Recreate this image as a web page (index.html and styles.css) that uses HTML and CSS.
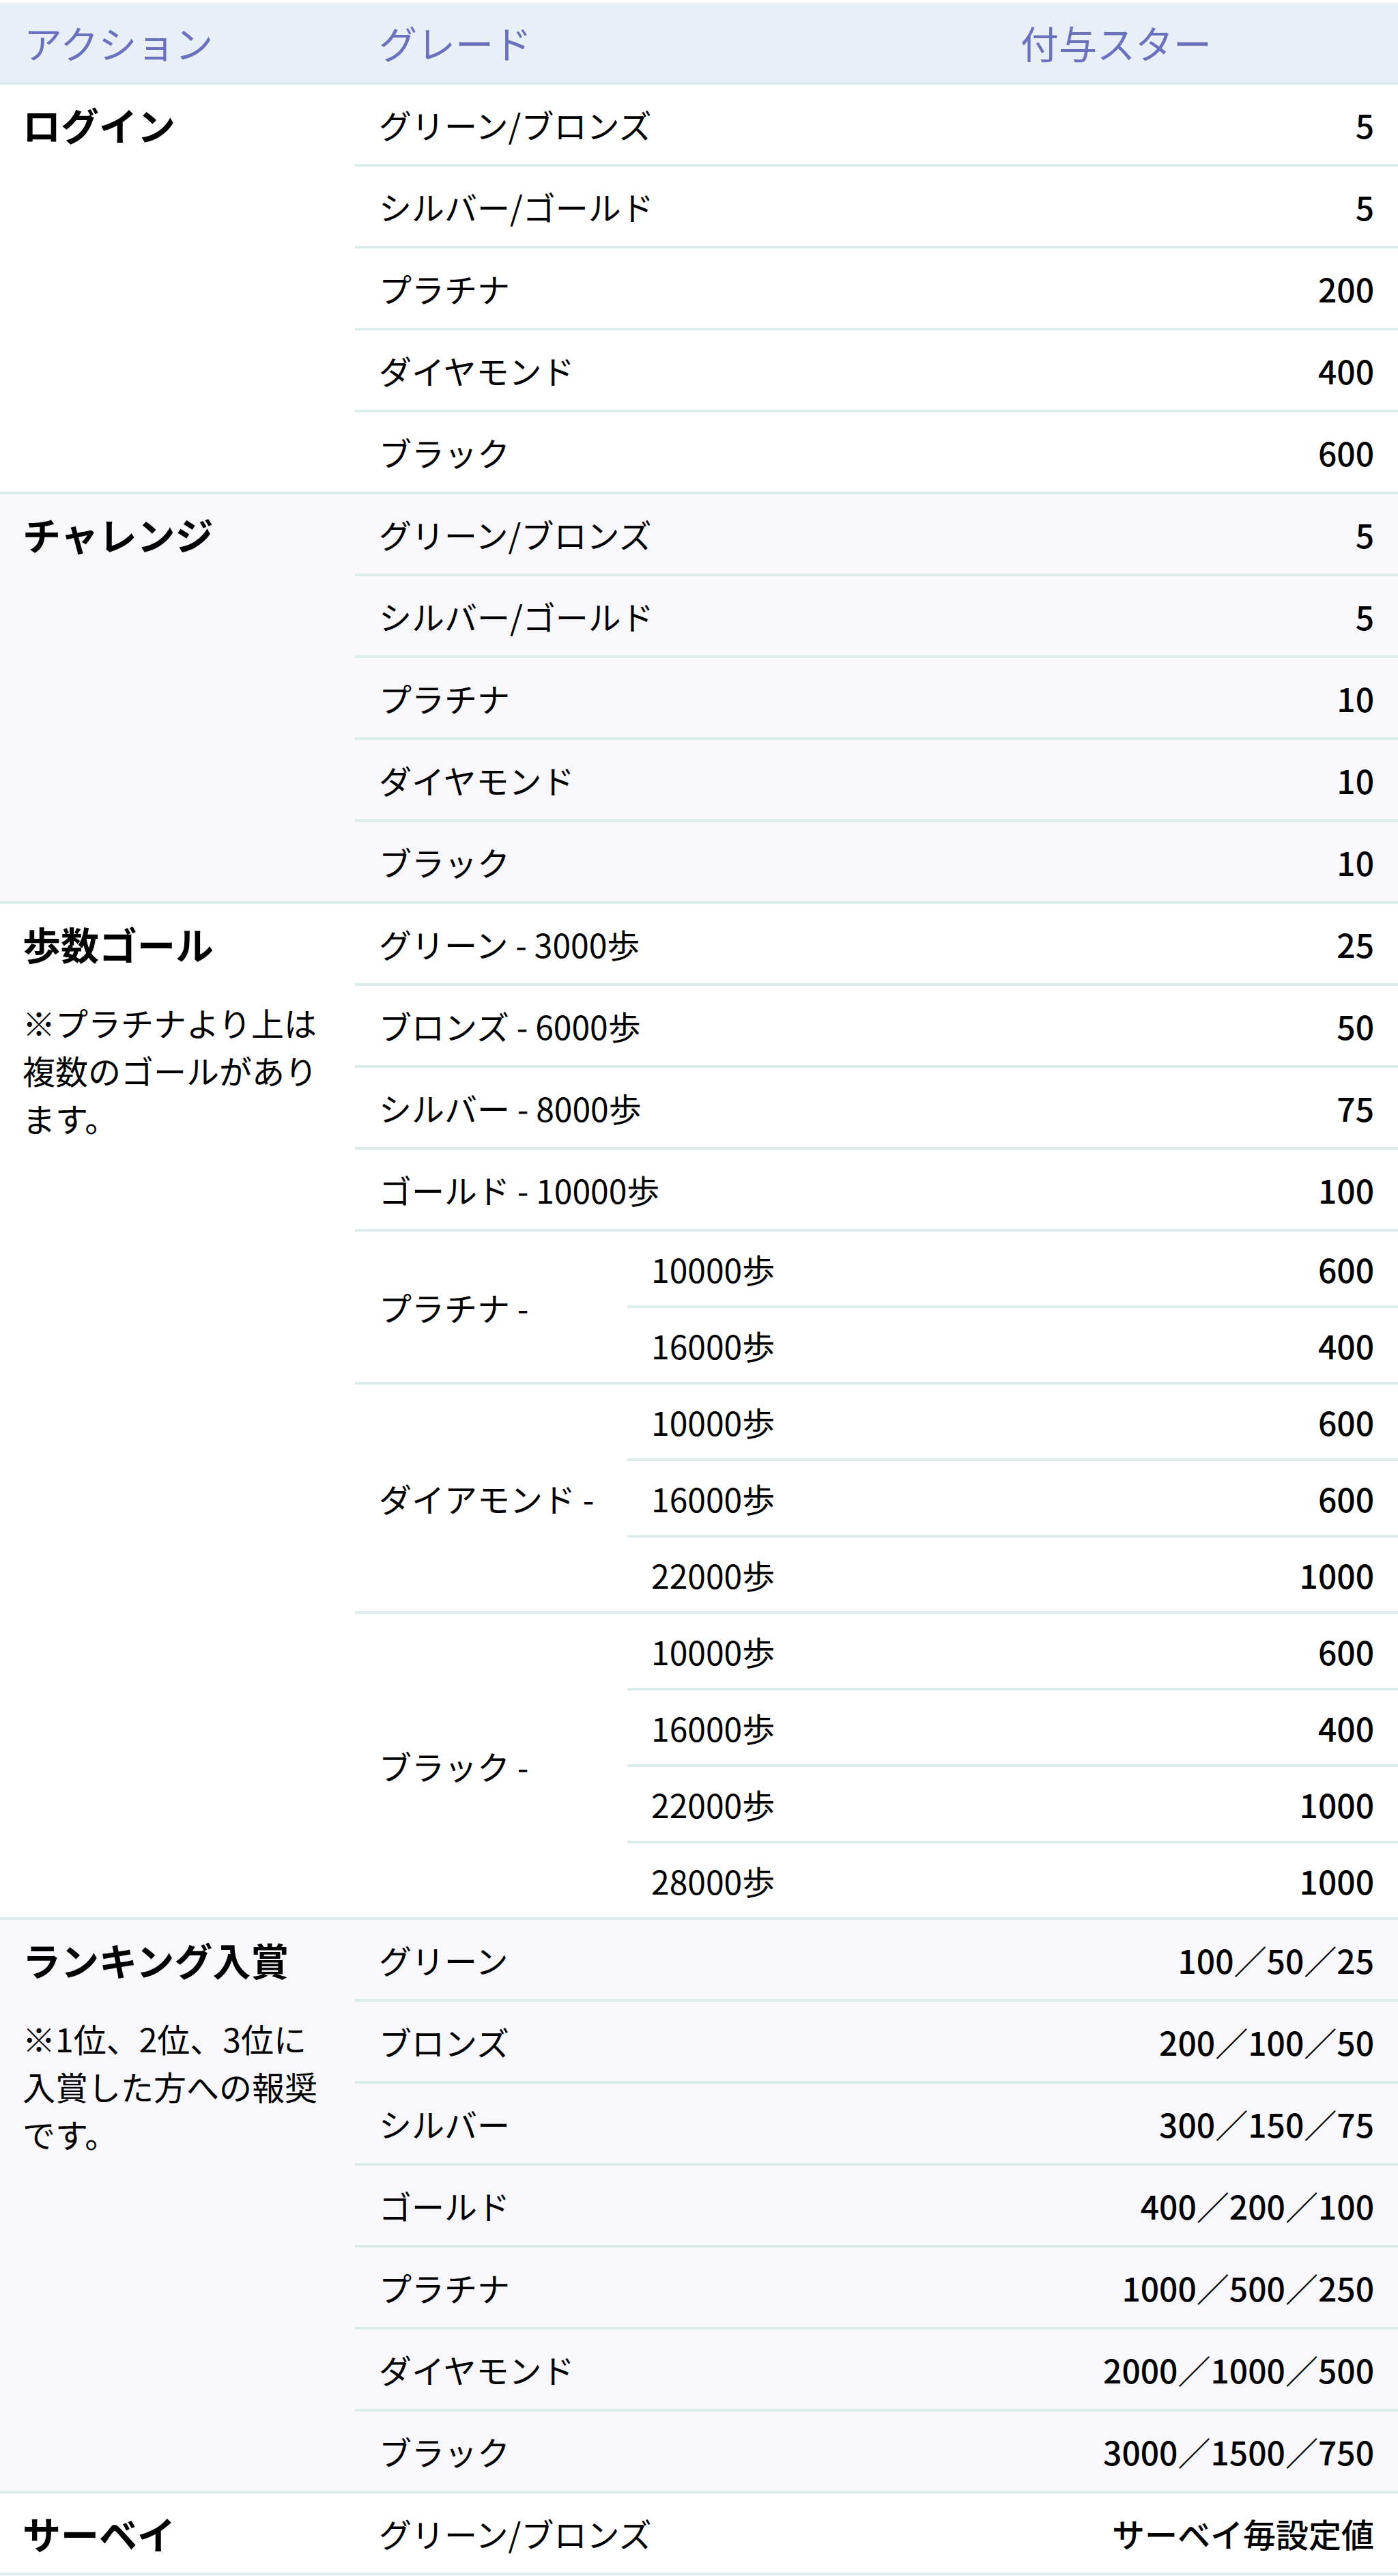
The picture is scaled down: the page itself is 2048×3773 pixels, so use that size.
FILE: index.html
```html
<!DOCTYPE html>
<html lang="ja">
<head>
    <meta charset="UTF-8">
    <meta name="viewport" content="width=device-width, initial-scale=1.0">
    <title>付与スター一覧</title>
    <link rel="stylesheet" href="styles.css">
</head>
<body>
    <table class="stars">
        <colgroup>
            <col class="c-action">
            <col class="c-grade">
            <col class="c-step">
            <col class="c-star">
        </colgroup>
        <thead>
            <tr>
                <th>アクション</th>
                <th colspan="2">グレード</th>
                <th class="star-head">付与スター</th>
            </tr>
        </thead>

        <!-- ログイン -->
        <tbody>
            <tr>
                <td rowspan="5" class="action"><p class="action-name">ログイン</p></td>
                <td colspan="2">グリーン/ブロンズ</td>
                <td class="num">5</td>
            </tr>
            <tr><td colspan="2">シルバー/ゴールド</td><td class="num">5</td></tr>
            <tr><td colspan="2">プラチナ</td><td class="num">200</td></tr>
            <tr><td colspan="2">ダイヤモンド</td><td class="num">400</td></tr>
            <tr><td colspan="2">ブラック</td><td class="num">600</td></tr>
        </tbody>

        <!-- チャレンジ -->
        <tbody class="alt">
            <tr>
                <td rowspan="5" class="action"><p class="action-name">チャレンジ</p></td>
                <td colspan="2">グリーン/ブロンズ</td>
                <td class="num">5</td>
            </tr>
            <tr><td colspan="2">シルバー/ゴールド</td><td class="num">5</td></tr>
            <tr><td colspan="2">プラチナ</td><td class="num">10</td></tr>
            <tr><td colspan="2">ダイヤモンド</td><td class="num">10</td></tr>
            <tr><td colspan="2">ブラック</td><td class="num">10</td></tr>
        </tbody>

        <!-- 歩数ゴール -->
        <tbody>
            <tr>
                <td rowspan="13" class="action">
                    <p class="action-name">歩数ゴール</p>
                    <p class="note">※プラチナより上は複数のゴールがあります。</p>
                </td>
                <td colspan="2">グリーン - 3000歩</td>
                <td class="num">25</td>
            </tr>
            <tr><td colspan="2">ブロンズ - 6000歩</td><td class="num">50</td></tr>
            <tr><td colspan="2">シルバー - 8000歩</td><td class="num">75</td></tr>
            <tr><td colspan="2">ゴールド - 10000歩</td><td class="num">100</td></tr>

            <tr class="sub">
                <td rowspan="2" class="group">プラチナ -</td>
                <td>10000歩</td>
                <td class="num">600</td>
            </tr>
            <tr class="sub"><td>16000歩</td><td class="num">400</td></tr>

            <tr class="sub">
                <td rowspan="3" class="group">ダイアモンド -</td>
                <td>10000歩</td>
                <td class="num">600</td>
            </tr>
            <tr class="sub"><td>16000歩</td><td class="num">600</td></tr>
            <tr class="sub"><td>22000歩</td><td class="num">1000</td></tr>

            <tr class="sub">
                <td rowspan="4" class="group">ブラック -</td>
                <td>10000歩</td>
                <td class="num">600</td>
            </tr>
            <tr class="sub"><td>16000歩</td><td class="num">400</td></tr>
            <tr class="sub"><td>22000歩</td><td class="num">1000</td></tr>
            <tr class="sub"><td>28000歩</td><td class="num">1000</td></tr>
        </tbody>

        <!-- ランキング入賞 -->
        <tbody class="alt">
            <tr>
                <td rowspan="7" class="action">
                    <p class="action-name">ランキング入賞</p>
                    <p class="note">※1位、2位、3位に入賞した方への報奨です。</p>
                </td>
                <td colspan="2">グリーン</td>
                <td class="num">100／50／25</td>
            </tr>
            <tr><td colspan="2">ブロンズ</td><td class="num">200／100／50</td></tr>
            <tr><td colspan="2">シルバー</td><td class="num">300／150／75</td></tr>
            <tr><td colspan="2">ゴールド</td><td class="num">400／200／100</td></tr>
            <tr><td colspan="2">プラチナ</td><td class="num">1000／500／250</td></tr>
            <tr><td colspan="2">ダイヤモンド</td><td class="num">2000／1000／500</td></tr>
            <tr><td colspan="2">ブラック</td><td class="num">3000／1500／750</td></tr>
        </tbody>

        <!-- サーベイ -->
        <tbody>
            <tr>
                <td class="action"><p class="action-name">サーベイ</p></td>
                <td colspan="2">グリーン/ブロンズ</td>
                <td class="num">サーベイ毎設定値</td>
            </tr>
        </tbody>
    </table>
</body>
</html>
```

FILE: styles.css
```css
body {
    margin: 0;
    font-family: "Noto Sans CJK JP", "Noto Sans", sans-serif;
    color: #000;
    background: #fff;
}
.stars {
    width: 2048px;
    margin-top: 4px;
    border-collapse: separate;
    border-spacing: 0;
    table-layout: fixed;
}
.c-action { width: 520px; }
.c-grade { width: 399px; }
.c-step { width: 303px; }
.c-star { width: 826px; }

th, td {
    padding: 22px 35px;
    font-size: 48px;
    line-height: 72px;
    border-bottom: 4px solid #ddebeb;
    text-align: left;
    vertical-align: middle;
}
th {
    font-size: 56px;
    font-weight: 400;
    color: #6a72bd;
    background: #e8eff7;
}
.star-head {
    text-align: center;
}
td.action {
    padding-left: 33px;
    vertical-align: top;
}
.action-name {
    margin: 0;
    font-size: 56px;
    font-weight: 700;
    line-height: 72px;
}
.note {
    margin: 44px 0 0;
    line-height: 70px;
}
.num {
    text-align: right;
    font-weight: 500;
}
.sub td {
    padding-top: 18px;
    padding-bottom: 18px;
}
.alt td {
    background: #f7f7fc;
}
```
